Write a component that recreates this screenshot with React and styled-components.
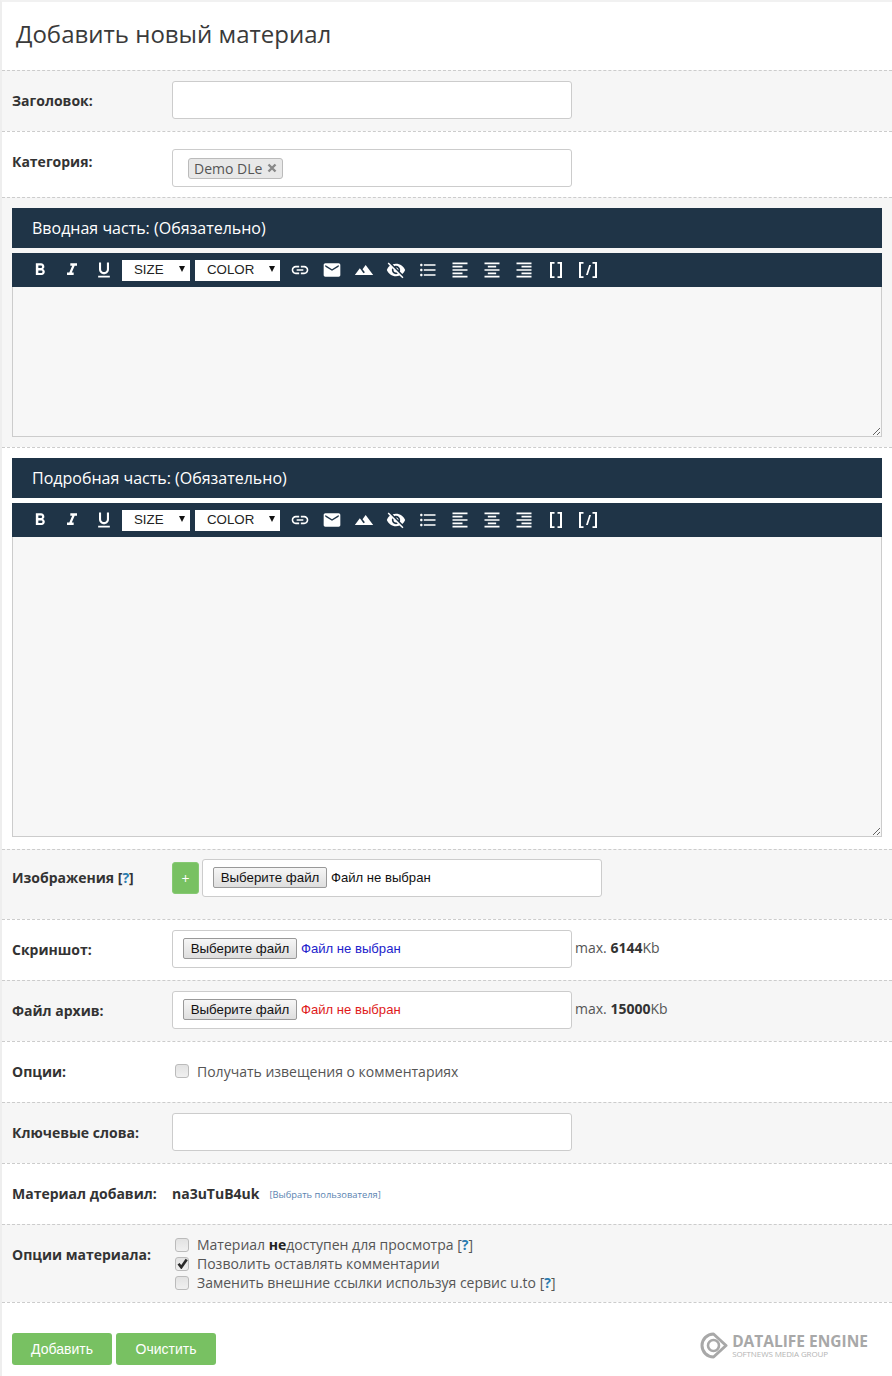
import React from 'react';
import styled, { createGlobalStyle } from 'styled-components';

const GlobalStyle = createGlobalStyle`
  html, body {
    margin: 0;
    padding: 0;
    background: #fff;
    color: #333;
    font-family: "Open Sans", "Liberation Sans", sans-serif;
    font-size: 14px;
  }
  * { box-sizing: border-box; }
`;

const Page = styled.div`
  width: 892px;
  height: 1376px;
  overflow: hidden;
  border-top: 2px solid #f1f1f1;
  border-left: 2px solid #eee;
`;

const Title = styled.h1`
  margin: 0;
  height: 68px;
  padding: 15px 14px 0;
  font-size: 24px;
  line-height: 33px;
  font-weight: 400;
  color: #3a3a3a;
`;

const Row = styled.div`
  display: flex;
  align-items: ${p => (p.$top ? 'flex-start' : 'center')};
  height: ${p => p.$h}px;
  padding: 0 10px;
  border-top: 1px dashed #ccc;
  background: ${p => (p.$alt ? '#f6f6f6' : '#fff')};
`;

const Label = styled.div`
  flex: 0 0 160px;
  font-weight: 700;
  line-height: 20px;
  color: #333;
  margin-top: ${p => p.$mt || 0}px;
  margin-bottom: ${p => p.$mb || 0}px;
`;

const Control = styled.div`
  display: flex;
  align-items: center;
  margin-top: ${p => p.$mt || 0}px;
  margin-bottom: ${p => p.$mb ?? 2}px;
`;

const TextInput = styled.input`
  display: block;
  width: 400px;
  height: 38px;
  padding: 0 8px;
  background: #fff;
  border: 1px solid #ccc;
  border-radius: 3px;
  outline: none;
`;

const TagBox = styled.div`
  display: flex;
  align-items: center;
  width: 400px;
  height: 38px;
  padding: 0 15px;
  background: #fff;
  border: 1px solid #ccc;
  border-radius: 3px;
`;

const Tag = styled.span`
  display: inline-flex;
  align-items: center;
  height: 21px;
  padding: 0 5px;
  background: #e8e8e8;
  border: 1px solid #bbb;
  border-radius: 3px;
  color: #555;
  font-size: 14px;
`;

const TagClose = styled.svg`
  display: block;
  margin-left: 5px;
  color: #888;
`;

const EditorBlock = styled.div`
  height: ${p => p.$h}px;
  padding: 10px 10px 0;
  border-top: 1px dashed #ccc;
  background: ${p => (p.$alt ? '#f6f6f6' : '#fff')};
`;

const EditorTitle = styled.div`
  height: 40px;
  padding-left: 20px;
  background: #1f3447;
  color: #fff;
  font-size: 16px;
  line-height: 40px;
`;

const Toolbar = styled.div`
  display: flex;
  align-items: center;
  height: 34px;
  margin-top: 5px;
  padding-left: 12px;
  background: #1f3447;
`;

const ToolIcon = styled.span`
  display: flex;
  align-items: center;
  justify-content: center;
  flex: 0 0 32px;
  height: 34px;
  color: #fff;
`;

const FakeSelect = styled.div`
  display: flex;
  align-items: center;
  justify-content: space-between;
  width: ${p => p.$w}px;
  height: 21px;
  margin: 0 ${p => p.$mr}px 0 ${p => p.$ml}px;
  padding: 0 5px 2px 12px;
  background: #fff;
  color: #222;
  font-family: "Liberation Sans", Arial, sans-serif;
  font-size: 13.3px;
`;

const SelectArrow = styled.span`
  width: 0;
  height: 0;
  border-left: 3.5px solid transparent;
  border-right: 3.5px solid transparent;
  border-top: 6px solid #111;
`;

const EditorArea = styled.textarea`
  display: block;
  width: 870px;
  height: ${p => p.$h}px;
  padding: 8px;
  background: #f7f7f7;
  border: 1px solid #ccc;
  border-top: 0;
  border-radius: 0;
  outline: none;
  resize: vertical;
`;

const PlusButton = styled.button`
  width: 27px;
  height: 32px;
  margin-right: 3px;
  padding: 0;
  background: #78c162;
  border: 1px solid #86c973;
  border-radius: 3px;
  color: #fff;
  font-family: "Open Sans", sans-serif;
  font-size: 14px;
`;

const FileField = styled.div`
  display: flex;
  align-items: center;
  width: 400px;
  height: 38px;
  padding: 0 10px 2px;
  background: #fff;
  border: 1px solid #ccc;
  border-radius: 3px;
  font-family: "Liberation Sans", Arial, sans-serif;
  font-size: 13.1px;
`;

const FileButton = styled.button`
  width: 114px;
  height: 21px;
  padding: 0;
  background: linear-gradient(#f6f6f6, #dedede);
  border: 1px solid #999;
  border-radius: 2px;
  color: #111;
  font-family: "Liberation Sans", Arial, sans-serif;
  font-size: 13.3px;
`;

const FileName = styled.span`
  margin-left: 4px;
  color: ${p => p.$color || '#111'};
`;

const Limit = styled.span`
  margin: 0 0 2px 3px;
  color: #555;
  line-height: 20px;
  b { color: #333; }
`;

const HelpLink = styled.a`
  color: #333;
  font-weight: ${p => (p.$bold ? 700 : 400)};
`;

const HelpMark = styled.b`
  color: #2b7cb0;
  font-weight: 700;
`;

const Strong = styled.b`
  color: #222;
`;

const CheckList = styled.div`
  display: flex;
  flex-direction: column;
`;

const CheckRow = styled.label`
  display: flex;
  align-items: center;
  height: 19px;
  padding-left: 3px;
  color: #555;
  ${HelpLink} { color: #555; }
`;

const CheckBox = styled.span`
  display: flex;
  align-items: center;
  justify-content: center;
  flex: 0 0 14px;
  width: 14px;
  height: 14px;
  margin-right: 8px;
  background: linear-gradient(#e2e2e2, #f0f0f0);
  border: 1px solid #bbb;
  border-radius: 3px;
`;

const AuthorName = styled.span`
  font-weight: 700;
  color: #333;
`;

const AuthorLink = styled.a`
  margin-left: 10px;
  margin-top: 3px;
  color: #5b84b1;
  font-size: 9.35px;
`;

const Footer = styled.div`
  display: flex;
  align-items: flex-start;
  justify-content: space-between;
  height: 74px;
  padding: 30px 24px 0 10px;
  border-top: 1px dashed #ccc;
`;

const Buttons = styled.div`
  display: flex;
  gap: 4px;
`;

const SubmitButton = styled.button`
  width: 100px;
  height: 32px;
  padding: 0;
  background: #78c162;
  border: 0;
  border-radius: 3px;
  color: #fff;
  font-family: "Liberation Sans", Arial, sans-serif;
  font-size: 14px;
`;

const Logo = styled.div`
  display: flex;
  align-items: flex-start;
  gap: 4px;
  margin-top: -1px;
  color: #a8a8a8;
`;

const LogoText = styled.div`
  display: flex;
  flex-direction: column;
  margin-top: 1px;
`;

const LogoTitle = styled.span`
  font-size: 15.5px;
  line-height: 16px;
  font-weight: 700;
  white-space: nowrap;
`;

const LogoSub = styled.span`
  font-size: 8px;
  line-height: 10px;
  letter-spacing: -0.1px;
  color: #b4b4b4;
  white-space: nowrap;
`;

const icons = {
  bold: 'M15.6 10.79c.97-.67 1.65-1.77 1.65-2.79 0-2.26-1.75-4-4-4H7v14h7.04c2.09 0 3.71-1.7 3.71-3.79 0-1.52-.86-2.82-2.15-3.42zM10 6.5h3c.83 0 1.5.67 1.5 1.5s-.67 1.5-1.5 1.5h-3v-3zm3.5 9H10v-3h3.5c.83 0 1.5.67 1.5 1.5s-.67 1.5-1.5 1.5z',
  italic: 'M10 4v3h2.21l-3.42 8H6v3h8v-3h-2.21l3.42-8H18V4z',
  underline: 'M12 17c3.31 0 6-2.69 6-6V3h-2.5v8c0 1.93-1.57 3.5-3.5 3.5S8.5 12.93 8.5 11V3H6v8c0 3.31 2.69 6 6 6zm-7 2v2h14v-2H5z',
  link: 'M3.9 12c0-1.71 1.39-3.1 3.1-3.1h4V7H7c-2.76 0-5 2.24-5 5s2.24 5 5 5h4v-1.9H7c-1.71 0-3.1-1.39-3.1-3.1zM8 13h8v-2H8v2zm9-6h-4v1.9h4c1.71 0 3.1 1.39 3.1 3.1s-1.39 3.1-3.1 3.1h-4V17h4c2.76 0 5-2.24 5-5s-2.24-5-5-5z',
  mail: 'M20 4H4c-1.1 0-1.99.9-1.99 2L2 18c0 1.1.9 2 2 2h16c1.1 0 2-.9 2-2V6c0-1.1-.9-2-2-2zm0 4l-8 5-8-5V6l8 5 8-5v2z',
  terrain: 'M14 6l-3.75 5 2.85 3.8-1.6 1.2C9.81 13.75 7 10 7 10l-6 8h22L14 6z',
  hide: 'M12 7c2.76 0 5 2.24 5 5 0 .65-.13 1.26-.36 1.83l2.92 2.92c1.51-1.26 2.7-2.89 3.43-4.75-1.73-4.39-6-7.5-11-7.5-1.4 0-2.74.25-3.98.7l2.16 2.16C10.74 7.13 11.35 7 12 7zM2 4.27l2.28 2.28.46.46C3.08 8.3 1.78 10.02 1 12c1.73 4.39 6 7.5 11 7.5 1.55 0 3.03-.3 4.38-.84l.42.42L19.73 22 21 20.73 3.27 3 2 4.27zM7.53 9.8l1.55 1.55c-.05.21-.08.43-.08.65 0 1.66 1.34 3 3 3 .22 0 .44-.03.65-.08l1.55 1.55c-.67.33-1.41.53-2.2.53-2.76 0-5-2.24-5-5 0-.79.2-1.53.53-2.2zm4.31-.78l3.15 3.15.02-.16c0-1.66-1.34-3-3-3l-.17.01z',
  list: 'M4 10.5c-.83 0-1.5.67-1.5 1.5s.67 1.5 1.5 1.5 1.5-.67 1.5-1.5-.67-1.5-1.5-1.5zm0-6c-.83 0-1.5.67-1.5 1.5S3.17 7.5 4 7.5 5.5 6.83 5.5 6 4.83 4.5 4 4.5zm0 12c-.83 0-1.5.68-1.5 1.5s.68 1.5 1.5 1.5 1.5-.68 1.5-1.5-.67-1.5-1.5-1.5zM7 19h14v-2H7v2zm0-6h14v-2H7v2zm0-8v2h14V5H7z',
  left: 'M15 15H3v2h12v-2zm0-8H3v2h12V7zM3 13h18v-2H3v2zm0 8h18v-2H3v2zM3 3v2h18V3H3z',
  center: 'M7 15v2h10v-2H7zm-4 6h18v-2H3v2zm0-8h18v-2H3v2zm4-6v2h10V7H7zM3 3v2h18V3H3z',
  right: 'M3 21h18v-2H3v2zm6-4h12v-2H9v2zm-6-4h18v-2H3v2zm6-4h12V7H9v2zM3 3v2h18V3H3z',
  code: 'M4 2h4.5v1.8H6v12.4h2.5V18H4zM16 2h-4.500v1.800H14v12.400h-2.500V18H16z',
  leech: 'M1 2h4.500v1.800H3v12.400h2.500V18H1zM19 2h-4.500v1.800H17v12.400h-2.500V18H19zM11.200 5h1.800L9.800 15H8z',
};

const Icon = ({ name, box = 24 }) => (
  <ToolIcon>
    <svg width="20" height="20" viewBox={`0 0 ${box} ${box}`} fill="currentColor">
      <path d={icons[name]} />
    </svg>
  </ToolIcon>
);

const EditorToolbar = () => (
  <Toolbar>
    <Icon name="bold" />
    <Icon name="italic" />
    <Icon name="underline" />
    <FakeSelect $w={68} $ml={2} $mr={5}>SIZE<SelectArrow /></FakeSelect>
    <FakeSelect $w={85} $ml={0} $mr={4}>COLOR<SelectArrow /></FakeSelect>
    <Icon name="link" />
    <Icon name="mail" />
    <Icon name="terrain" />
    <Icon name="hide" />
    <Icon name="list" />
    <Icon name="left" />
    <Icon name="center" />
    <Icon name="right" />
    <Icon name="code" box={20} />
    <Icon name="leech" box={20} />
  </Toolbar>
);

const Editor = ({ title, blockHeight, areaHeight, alt }) => (
  <EditorBlock $h={blockHeight} $alt={alt}>
    <EditorTitle>{title}</EditorTitle>
    <EditorToolbar />
    <EditorArea $h={areaHeight} />
  </EditorBlock>
);

const Check = ({ checked, children }) => (
  <CheckRow>
    <CheckBox>
      {checked && (
        <svg width="11" height="11" viewBox="0 0 10 10">
          <path d="M1.4 5.2 3.9 8.4 8.8 1.4" fill="none" stroke="#2a2a2a" strokeWidth="2.4" />
        </svg>
      )}
    </CheckBox>
    <span>{children}</span>
  </CheckRow>
);

const Help = () => <HelpLink>[<HelpMark>?</HelpMark>]</HelpLink>;

const FileChooser = ({ color }) => (
  <FileField>
    <FileButton type="button">Выберите файл</FileButton>
    <FileName $color={color}>Файл не выбран</FileName>
  </FileField>
);

export default function App() {
  return (
    <Page>
      <GlobalStyle />
      <Title>Добавить новый материал</Title>

      <Row $alt $h={61}>
        <Label>Заголовок:</Label>
        <Control><TextInput /></Control>
      </Row>

      <Row $top $h={66}>
        <Label $mt={20}>Категория:</Label>
        <Control $mt={17}>
          <TagBox>
            <Tag>
              Demo DLe
              <TagClose width="10" height="10" viewBox="0 0 10 10">
                <path d="M1.5 1.5l7 7M8.5 1.5l-7 7" stroke="currentColor" strokeWidth="2.4" />
              </TagClose>
            </Tag>
          </TagBox>
        </Control>
      </Row>

      <Editor alt title="Вводная часть: (Обязательно)" blockHeight={250} areaHeight={150} />
      <Editor title="Подробная часть: (Обязательно)" blockHeight={402} areaHeight={300} />

      <Row $alt $h={70}>
        <Label $mb={13}><HelpLink $bold>Изображения [<HelpMark>?</HelpMark>]</HelpLink></Label>
        <Control $mb={13}>
          <PlusButton type="button">+</PlusButton>
          <FileChooser />
        </Control>
      </Row>

      <Row $h={61}>
        <Label>Скриншот:</Label>
        <Control><FileChooser color="#2222cc" /><Limit>max. <b>6144</b>Kb</Limit></Control>
      </Row>

      <Row $alt $h={61}>
        <Label>Файл архив:</Label>
        <Control><FileChooser color="#e01b1b" /><Limit>max. <b>15000</b>Kb</Limit></Control>
      </Row>

      <Row $h={61}>
        <Label>Опции:</Label>
        <Control><Check>Получать извещения о комментариях</Check></Control>
      </Row>

      <Row $alt $h={61}>
        <Label>Ключевые слова:</Label>
        <Control><TextInput /></Control>
      </Row>

      <Row $h={61}>
        <Label>Материал добавил:</Label>
        <Control>
          <AuthorName>na3uTuB4uk</AuthorName>
          <AuthorLink>[Выбрать пользователя]</AuthorLink>
        </Control>
      </Row>

      <Row $alt $h={78}>
        <Label $mb={18}>Опции материала:</Label>
        <CheckList>
          <Check>Материал <Strong>не</Strong>доступен для просмотра <Help /></Check>
          <Check checked>Позволить оставлять комментарии</Check>
          <Check>Заменить внешние ссылки используя сервис u.to <Help /></Check>
        </CheckList>
      </Row>

      <Footer>
        <Buttons>
          <SubmitButton type="button">Добавить</SubmitButton>
          <SubmitButton type="button">Очистить</SubmitButton>
        </Buttons>
        <Logo>
          <svg width="28" height="27" viewBox="0 0 28 27" fill="none" stroke="currentColor" strokeWidth="3" strokeLinejoin="round">
            <path d="M13.5 2 26 13.5 13.5 25A11.5 11.5 0 0 1 13.5 2z" />
            <circle cx="13.5" cy="13.5" r="5.5" strokeWidth="2.6" />
          </svg>
          <LogoText>
            <LogoTitle>DATALIFE ENGINE</LogoTitle>
            <LogoSub>SOFTNEWS MEDIA GROUP</LogoSub>
          </LogoText>
        </Logo>
      </Footer>
    </Page>
  );
}
